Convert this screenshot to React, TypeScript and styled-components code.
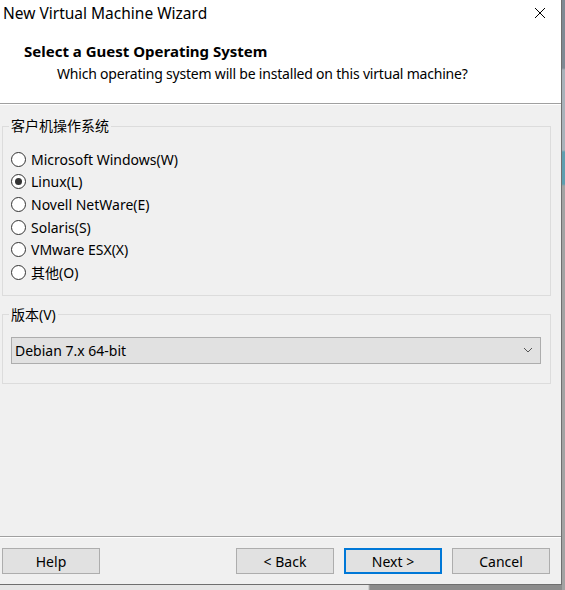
import React, { useState } from "react";
import styled, { createGlobalStyle } from "styled-components";

const GlobalStyle = createGlobalStyle`
  html, body {
    margin: 0;
    padding: 0;
    background: #d9d9d9;
  }
  body {
    font-family: "Noto Sans", "Noto Sans CJK SC", sans-serif;
    color: #000;
  }
`;

const Desktop = styled.div`
  width: 565px;
  height: 590px;
  display: flex;
  background: linear-gradient(to right, #e6e6e6 0, #e6e6e6 368px, #8c8c8c 370px);
`;

const Window = styled.div`
  width: 561px;
  height: 584px;
  display: flex;
  flex-direction: column;
  background: #f0f0f0;
  border-right: 1px solid #6f6f6f;
  border-bottom: 1px solid #6f6f6f;
`;

const SideStrip = styled.div`
  width: 3px;
  height: 590px;
  background: linear-gradient(to bottom, #7f8a94 0, #7f8a94 68px, #a9b2ba 70px, #a9b2ba 150px, #5e9fb0 152px, #5e9fb0 184px, #a3a3a3 186px);
`;

const TitleBar = styled.div`
  height: 30px;
  display: flex;
  align-items: center;
  justify-content: space-between;
  background: #fff;
  padding: 0 15px 4px 3px;
  box-sizing: border-box;
`;

const TitleText = styled.span`
  font-size: 15.5px;
`;

const CloseIcon = () => (
  <svg width="12" height="12" viewBox="0 0 12 12">
    <path d="M1 1 L11 11 M11 1 L1 11" stroke="#000" strokeWidth="1" fill="none" />
  </svg>
);

const Header = styled.div`
  height: 74px;
  background: #fff;
  border-bottom: 1px solid #a0a0a0;
  padding: 11px 0 0 24px;
  box-sizing: border-box;
`;

const Heading = styled.h1`
  margin: 0;
  font-size: 15px;
  font-weight: 700;
  line-height: 20px;
`;

const SubHeading = styled.p`
  margin: 3px 0 0 33px;
  font-size: 14px;
  line-height: 20px;
  letter-spacing: -0.2px;
`;

const Body = styled.div`
  flex: 1;
  padding: 11px 10px 0 2px;
  display: flex;
  flex-direction: column;
  gap: 9px;
  border-top: 1px solid #fff;
`;

const Group = styled.fieldset<{ $bottom: number }>`
  margin: 0;
  padding: 0 9px ${(p) => p.$bottom}px 8px;
  border: 1px solid #dcdcdc;
  min-width: 0;
`;

const Legend = styled.legend`
  margin-left: -2px;
  padding: 0 2px;
  font-size: 14px;
  line-height: 20px;
`;

const RadioList = styled.div`
  padding-top: 12px;
  display: flex;
  flex-direction: column;
`;

const RadioRow = styled.label`
  height: 22.6px;
  display: flex;
  align-items: center;
  gap: 5px;
  font-size: 14px;
  cursor: default;
`;

const RadioCircle = styled.span<{ $checked: boolean }>`
  width: 13px;
  height: 13px;
  border-radius: 50%;
  border: 1px solid #333;
  background: #fff;
  display: flex;
  align-items: center;
  justify-content: center;
  flex-shrink: 0;

  &::after {
    content: "";
    width: 7px;
    height: 7px;
    border-radius: 50%;
    background: ${(p) => (p.$checked ? "#333" : "transparent")};
  }
`;

const Select = styled.div`
  margin-top: 12px;
  height: 25px;
  border: 1px solid #adadad;
  background: #e1e1e1;
  display: flex;
  align-items: center;
  justify-content: space-between;
  padding: 0 7px 0 3px;
  font-size: 14px;
`;

const Chevron = () => (
  <svg width="10" height="6" viewBox="0 0 10 6">
    <path d="M1 1 L5 5 L9 1" stroke="#555" strokeWidth="1" fill="none" />
  </svg>
);

const Footer = styled.div`
  height: 48px;
  border-top: 1px solid #a0a0a0;
  box-shadow: inset 0 1px 0 #fff;
  padding: 11px 11px 0 2px;
  box-sizing: border-box;
  display: flex;
  gap: 10px;
`;

const Spacer = styled.div`
  flex: 1;
`;

const Button = styled.button<{ $primary?: boolean }>`
  width: 98px;
  height: 26px;
  margin: 0;
  padding: 0;
  background: #e1e1e1;
  border: ${(p) => (p.$primary ? "2px solid #0078d7" : "1px solid #adadad")};
  font-family: "Noto Sans", "Noto Sans CJK SC", sans-serif;
  font-size: 14px;
  color: #000;
`;

const osOptions = [
  "Microsoft Windows(W)",
  "Linux(L)",
  "Novell NetWare(E)",
  "Solaris(S)",
  "VMware ESX(X)",
  "其他(O)",
];

export default function App() {
  const [selected, setSelected] = useState(1);

  return (
    <>
      <GlobalStyle />
      <Desktop>
        <Window>
          <TitleBar>
            <TitleText>New Virtual Machine Wizard</TitleText>
            <CloseIcon />
          </TitleBar>
          <Header>
            <Heading>Select a Guest Operating System</Heading>
            <SubHeading>Which operating system will be installed on this virtual machine?</SubHeading>
          </Header>
          <Body>
            <Group $bottom={11}>
              <Legend>客户机操作系统</Legend>
              <RadioList>
                {osOptions.map((name, i) => (
                  <RadioRow key={name} onClick={() => setSelected(i)}>
                    <RadioCircle $checked={selected === i} />
                    {name}
                  </RadioRow>
                ))}
              </RadioList>
            </Group>
            <Group $bottom={19}>
              <Legend>版本(V)</Legend>
              <Select>
                <span>Debian 7.x 64-bit</span>
                <Chevron />
              </Select>
            </Group>
          </Body>
          <Footer>
            <Button>Help</Button>
            <Spacer />
            <Button>&lt; Back</Button>
            <Button $primary>Next &gt;</Button>
            <Button>Cancel</Button>
          </Footer>
        </Window>
        <SideStrip />
      </Desktop>
    </>
  );
}
